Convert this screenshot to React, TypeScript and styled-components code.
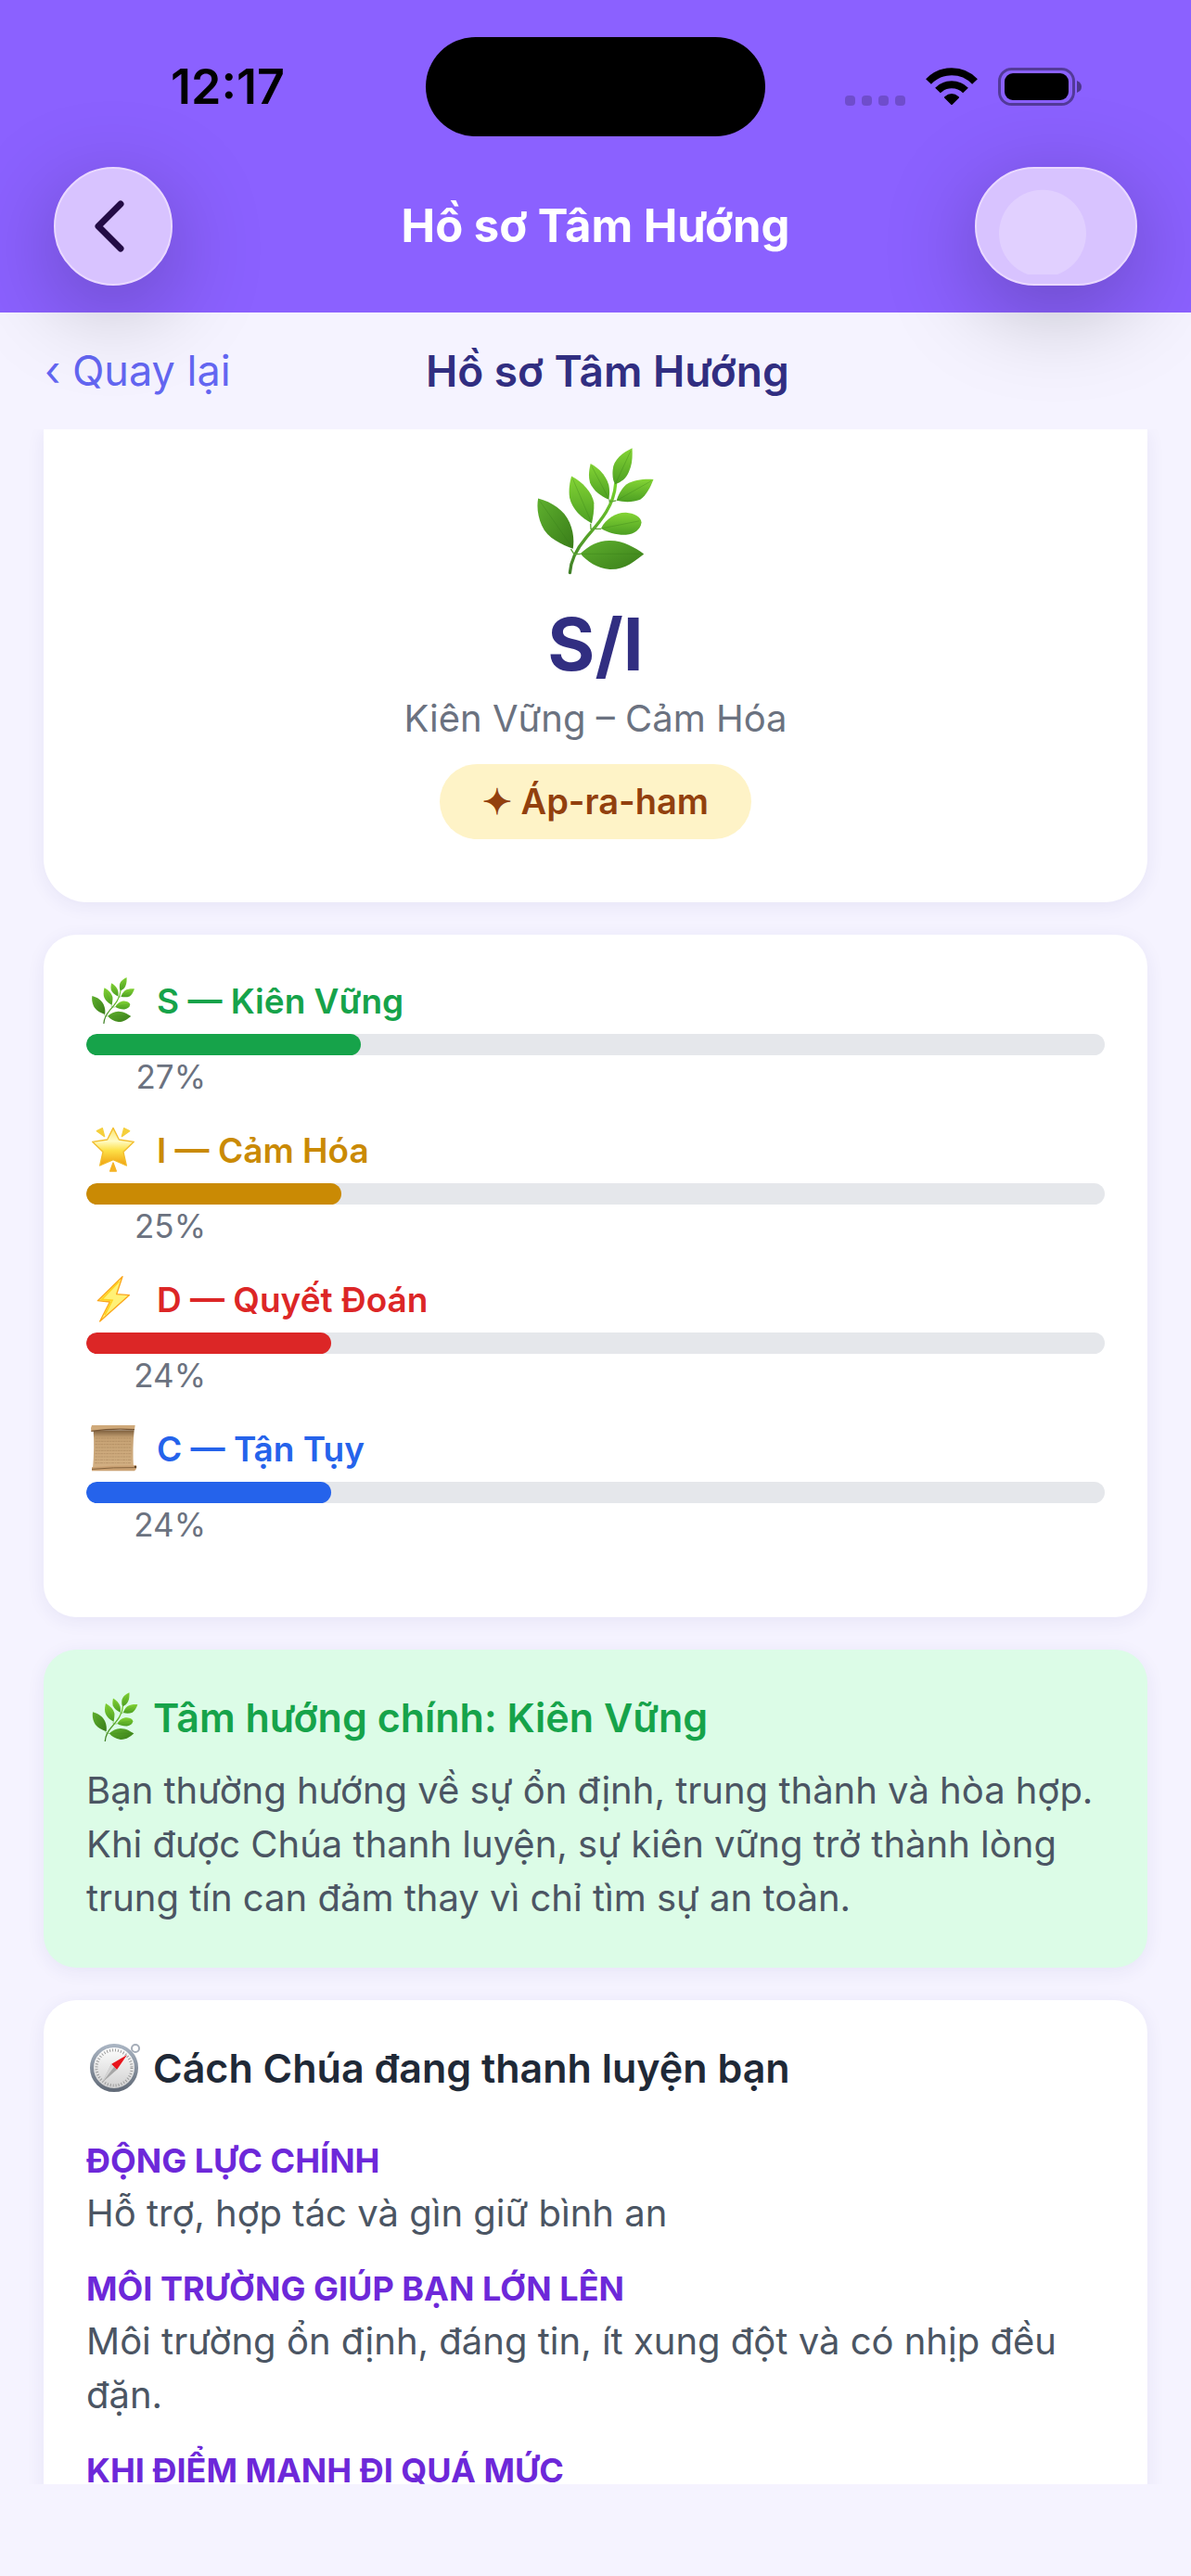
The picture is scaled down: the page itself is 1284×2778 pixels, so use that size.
import React from 'react';
import styled, { createGlobalStyle } from 'styled-components';

const GlobalStyle = createGlobalStyle`
  * {
    box-sizing: border-box;
  }

  body {
    margin: 0;
    background: #f5f3ff;
    font-family: Inter, 'Noto Sans', 'Liberation Sans', sans-serif;
  }

  h1, h2, h3, p {
    margin: 0;
  }

  button {
    border: 0;
    padding: 0;
    background: none;
    font: inherit;
    cursor: pointer;
  }
`;

const Screen = styled.div`
  display: flex;
  flex-direction: column;
  height: 100vh;
`;

/* the header sits above the page so the button shadows fall on it */
const Header = styled.header`
  position: relative;
  z-index: 1;
  flex: none;
  padding: 40px 0 29px;
  background: #8b61ff;
`;

const StatusBar = styled.div`
  display: grid;
  grid-template-columns: 1fr 366px 1fr;
  align-items: center;
`;

const Time = styled.span`
  padding-left: 32px;
  font-size: 52px;
  font-weight: 600;
  line-height: 60px;
  text-align: center;
`;

const Island = styled.div`
  height: 107px;
  border-radius: 54px;
  background: #000;
`;

const Indicators = styled.div`
  display: flex;
  align-items: flex-end;
  justify-content: center;
  gap: 22px;
  padding-right: 32px;
`;

const Dots = styled.div`
  display: flex;
  gap: 7px;
`;

const Dot = styled.span`
  width: 11px;
  height: 11px;
  border-radius: 4px;
  background: rgba(0, 0, 0, 0.2);
`;

const NavBar = styled.nav`
  display: grid;
  grid-template-columns: 1fr auto 1fr;
  align-items: center;
  margin-top: 33px;
  padding: 0 58px;
`;

const NavTitle = styled.h1`
  color: #fff;
  font-size: 49px;
  font-weight: 700;
  line-height: 60px;
`;

const GlassButton = styled.button<{ wide?: boolean }>`
  display: flex;
  align-items: center;
  justify-content: center;
  justify-self: ${({ wide }) => (wide ? 'end' : 'start')};
  width: ${({ wide }) => (wide ? '175px' : '128px')};
  height: 128px;
  border: 2px solid #ead9ff;
  border-radius: 64px;
  background: #d8c3ff;
  box-shadow: 0 24px 100px rgba(0, 0, 0, 0.26);
`;

const SubHeader = styled.div`
  display: flex;
  flex: none;
  align-items: center;
  justify-content: space-between;
  height: 126px;
  padding: 0 48px;
`;

const BackLink = styled.button`
  color: #6366f1;
  font-size: 45px;
  line-height: 60px;
`;

const PageTitle = styled.h2`
  color: #312e81;
  font-size: 46px;
  font-weight: 600;
  line-height: 60px;
`;

const Spacer = styled.div`
  width: 175px;
`;

const Content = styled.main`
  display: flex;
  flex: 1;
  flex-direction: column;
  gap: 35px;
  min-height: 0;
  margin-bottom: 99px;
  padding: 0 47px;
  overflow: hidden;
`;

const Card = styled.section<{ background?: string }>`
  flex: none;
  padding: 46px;
  border-radius: 35px;
  background: ${({ background }) => background || '#fff'};
  box-shadow: 0 4px 20px rgba(49, 46, 129, 0.07);
`;

const Hero = styled(Card)`
  display: flex;
  flex-direction: column;
  align-items: center;
  padding: 20px 46px 68px;
  border-radius: 0 0 47px 47px;
`;

const TypeCode = styled.h3`
  margin-top: 28px;
  color: #312e81;
  font-size: 78px;
  font-weight: 700;
  line-height: 94px;
`;

const TypeName = styled.p`
  margin-top: 4px;
  color: #6b7280;
  font-size: 40px;
  line-height: 58px;
`;

const Badge = styled.span`
  margin-top: 20px;
  padding: 0 46px;
  border-radius: 41px;
  background: #fef3c7;
  color: #92400e;
  font-size: 38px;
  font-weight: 600;
  line-height: 81px;
`;

const Score = styled.div`
  padding-bottom: 31px;
`;

const ScoreHead = styled.div`
  display: flex;
  align-items: center;
  gap: 18px;
  height: 50px;
`;

const ScoreLabel = styled.span<{ color: string }>`
  color: ${({ color }) => color};
  font-size: 37px;
  font-weight: 600;
`;

const Track = styled.div`
  height: 23px;
  margin-top: 11px;
  border-radius: 12px;
  background: #e5e7eb;
  overflow: hidden;
`;

const Fill = styled.div<{ color: string }>`
  height: 100%;
  border-radius: 12px;
  background: ${({ color }) => color};
`;

const Percent = styled.div`
  width: 129px;
  color: #6b7280;
  font-size: 35px;
  line-height: 46px;
  text-align: right;
`;

const CardTitle = styled.h3<{ color: string; space: number }>`
  display: flex;
  align-items: center;
  gap: 10px;
  height: 53px;
  margin-bottom: ${({ space }) => space}px;
  color: ${({ color }) => color};
  font-size: 43px;
  font-weight: 600;
`;

const Body = styled.p`
  color: #4b5563;
  font-size: 40px;
  line-height: 58px;
`;

const Topic = styled.div`
  padding-bottom: 30px;
`;

const TopicLabel = styled.h4`
  margin: 0 0 6px;
  color: #6d28d9;
  font-size: 36px;
  font-weight: 700;
  line-height: 44px;
  text-transform: uppercase;
`;

interface IconProps {
  width?: number;
  height?: number;
  viewBox?: string;
}

const Leaf: React.FC<IconProps> = ({
  width = 58,
  height = 50,
  viewBox = '8 40 475 410'
}) => (
  <svg width={width} height={height} viewBox={viewBox} aria-hidden="true">
    <defs>
      <linearGradient id="leafLight" x1="0" y1="0" x2="0" y2="1">
        <stop offset="0" stopColor="#84d435" />
        <stop offset="1" stopColor="#4c9f22" />
      </linearGradient>
      <linearGradient id="leafDark" x1="0" y1="0" x2="1" y2="1">
        <stop offset="0" stopColor="#5fb02e" />
        <stop offset="1" stopColor="#397d19" />
      </linearGradient>
      <linearGradient id="stem" x1="0" y1="0" x2="0" y2="1">
        <stop offset="0" stopColor="#76d32b" />
        <stop offset="1" stopColor="#3f7f27" />
      </linearGradient>
    </defs>
    <path
      d="M163 445C166 400 187 365 215 332C255 285 306 232 311 157"
      fill="none"
      stroke="url(#stem)"
      strokeWidth="10"
      strokeLinecap="round"
    />
    <path
      d="M166 368L177 385L198 384M230 286L231 303L265 303M291 207L292 215L313 211"
      fill="none"
      stroke="#5da536"
      strokeWidth="4"
    />
    <g fill="url(#leafLight)">
      <path d="M365 41C335 55 304 78 302 112C300 135 304 150 310 158C330 150 345 140 354 118C366 94 366 66 365 41Z" />
      <path d="M230 91C258 106 280 130 289 160C293 180 291 195 289 208C262 196 240 180 228 153C222 130 226 108 230 91Z" />
      <path d="M434 142C405 140 370 143 347 158C330 172 320 192 314 211C340 217 368 217 391 208C412 192 424 167 434 142Z" />
      <path d="M168 132C204 151 235 184 241 218C242 242 238 265 234 285C202 268 170 240 162 202C158 175 163 151 168 132Z" />
      <path d="M264 301C280 270 312 249 345 250C370 252 394 264 395 282C392 305 372 319 345 322C315 323 286 316 264 301Z" />
    </g>
    <g fill="url(#leafDark)">
      <path d="M60 204C105 216 145 242 162 282C175 312 177 340 173 367C138 354 90 334 72 292C59 262 55 232 60 204Z" />
      <path d="M197 383C225 357 254 342 290 341C336 340 374 364 403 384C374 405 345 435 292 434C250 430 219 409 197 383Z" />
    </g>
    <path
      d="M360 50L311 156M233 98L289 205M427 147L316 210M172 140L233 282M388 277L267 301M66 213L172 365M395 384L201 384"
      fill="none"
      stroke="#327a16"
      strokeWidth="2"
      opacity="0.45"
    />
  </svg>
);

const Star = () => (
  <svg width="58" height="50" viewBox="0 0 174 150" aria-hidden="true">
    <defs>
      <linearGradient id="star" x1="0" y1="0" x2="0" y2="1">
        <stop offset="0" stopColor="#fbe36a" />
        <stop offset="0.35" stopColor="#fffbc4" />
        <stop offset="0.6" stopColor="#fde047" />
        <stop offset="1" stopColor="#f0a010" />
      </linearGradient>
    </defs>
    <path
      d="M87 4L106 42L154 49L120 82L130 126L87 107L44 126L54 82L20 49L68 42Z"
      fill="url(#star)"
      stroke="#f2bd2c"
      strokeWidth="4"
      strokeLinejoin="round"
    />
    <path
      d="M34 14L52 5L59 32ZM140 14L122 5L115 32Z"
      fill="#f5cf3c"
      stroke="#f5cf3c"
      strokeWidth="4"
      strokeLinejoin="round"
    />
    <path
      d="M87 117L77 144H97Z"
      fill="#f5b324"
      stroke="#f5b324"
      strokeWidth="4"
      strokeLinejoin="round"
    />
  </svg>
);

const Bolt = () => (
  <svg width="58" height="50" viewBox="0 0 174 150" aria-hidden="true">
    <path
      d="M117 2L37 80L76 84L44 147L139 62L98 59Z"
      fill="#fff176"
      stroke="#fba61a"
      strokeWidth="4"
      strokeLinejoin="round"
    />
    <path d="M106 18L50 76L84 79L60 126" fill="none" stroke="#ffd21f" strokeWidth="5" />
  </svg>
);

const Scroll = () => (
  <svg width="58" height="50" viewBox="0 0 174 150" aria-hidden="true">
    <defs>
      <linearGradient id="paper" x1="0" y1="0" x2="0" y2="1">
        <stop offset="0" stopColor="#7d5f3d" />
        <stop offset="0.2" stopColor="#c6a274" />
        <stop offset="1" stopColor="#d3b083" />
      </linearGradient>
    </defs>
    <path d="M23 16H155Q149 75 153 138H21Q27 75 23 16Z" fill="url(#paper)" />
    <path
      d="M29 42H145M29 52H144M28 62H146M29 72H144M29 82H145M28 92H146M28 102H144M27 112H147M27 122H145"
      stroke="#8f6d45"
      strokeWidth="2"
      strokeDasharray="9 2 5 2"
      opacity="0.5"
    />
    <path d="M18 0H158L156 14Q88 10 16 19L15 9Z" fill="#cfa97a" />
    <path d="M16 19Q88 9 156 14" fill="none" stroke="#775634" strokeWidth="4" />
    <path d="M18 136Q90 128 162 130V141L156 148H18Z" fill="#cba274" />
    <path d="M18 142Q90 136 155 137" fill="none" stroke="#83613b" strokeWidth="3" />
    <circle cx="159" cy="135" r="4" fill="#5e4428" />
  </svg>
);

const Compass = () => (
  <svg width="62" height="53" viewBox="0 0 62 53" aria-hidden="true">
    <defs>
      <linearGradient id="rim" x1="0" y1="0" x2="0" y2="1">
        <stop offset="0" stopColor="#a9b4c2" />
        <stop offset="1" stopColor="#626b78" />
      </linearGradient>
      <linearGradient id="dial" x1="0" y1="0" x2="0" y2="1">
        <stop offset="0" stopColor="#ffffff" />
        <stop offset="1" stopColor="#cfcfcf" />
      </linearGradient>
    </defs>
    <circle cx="53" cy="6" r="4" fill="none" stroke="#a5adb8" strokeWidth="2" />
    <circle cx="30" cy="27" r="24" fill="url(#dial)" stroke="url(#rim)" strokeWidth="4" />
    <circle
      cx="30"
      cy="27"
      r="19"
      fill="none"
      stroke="#9b9b9b"
      strokeWidth="3"
      strokeDasharray="1 2"
    />
    <path d="M44 13L33 29L27 23Z" fill="#e8141c" />
    <path d="M33 29L17 43L27 23Z" fill="#a6a6a6" />
    <path d="M30 26L17 43L27 23Z" fill="#d6d6d6" />
  </svg>
);

const Wifi = () => (
  <svg width="56" height="41" viewBox="0 0 56 41" aria-hidden="true">
    <path
      d="M3 15A34.5 34.5 0 0 1 53 15M13 24.5A21 21 0 0 1 43 24.5"
      fill="none"
      stroke="#000"
      strokeWidth="8"
    />
    <path
      d="M21 32Q28 26 35 32L28 39Z"
      stroke="#000"
      strokeWidth="2"
      strokeLinejoin="round"
    />
  </svg>
);

const Battery = () => (
  <svg width="90" height="41" viewBox="0 0 90 41" aria-hidden="true">
    <rect
      x="1.5"
      y="1.5"
      width="80"
      height="38"
      rx="13"
      fill="none"
      stroke="#000"
      strokeOpacity="0.4"
      strokeWidth="3"
    />
    <rect x="7" y="6" width="69" height="29" rx="9" />
    <path d="M85 14Q90 16 90 20.500Q90 25 85 27Z" fillOpacity="0.45" />
  </svg>
);

const scores = [
  { label: 'S — Kiên Vững', value: 27, color: '#16a34a', icon: <Leaf /> },
  { label: 'I — Cảm Hóa', value: 25, color: '#ca8a04', icon: <Star /> },
  { label: 'D — Quyết Đoán', value: 24, color: '#dc2626', icon: <Bolt /> },
  { label: 'C — Tận Tụy', value: 24, color: '#2563eb', icon: <Scroll /> }
];

const topics = [
  { label: 'Động lực chính', text: 'Hỗ trợ, hợp tác và gìn giữ bình an' },
  {
    label: 'Môi trường giúp bạn lớn lên',
    text: 'Môi trường ổn định, đáng tin, ít xung đột và có nhịp đều đặn.'
  },
  { label: 'Khi điểm mạnh đi quá mức', text: '' }
];

const App: React.FC = () => (
  <Screen>
    <GlobalStyle />
    <Header>
      <StatusBar>
        <Time>12:17</Time>
        <Island />
        <Indicators>
          <Dots>
            <Dot />
            <Dot />
            <Dot />
            <Dot />
          </Dots>
          <Wifi />
          <Battery />
        </Indicators>
      </StatusBar>
      <NavBar>
        <GlassButton aria-label="Quay lại">
          <svg width="42" height="56" viewBox="0 0 42 56" aria-hidden="true">
            <path
              d="M29 4L5 28L29 52"
              fill="none"
              stroke="#230b45"
              strokeWidth="7"
              strokeLinecap="round"
              strokeLinejoin="round"
            />
          </svg>
        </GlassButton>
        <NavTitle>Hồ sơ Tâm Hướng</NavTitle>
        <GlassButton wide aria-label="Tùy chọn">
          <svg width="124" height="104" viewBox="0 -14 124 104" aria-hidden="true">
            <path d="M31 90A47 47 0 1 1 63 90Z" fill="#e1d0ff" />
          </svg>
        </GlassButton>
      </NavBar>
    </Header>
    <SubHeader>
      <BackLink>‹ Quay lại</BackLink>
      <PageTitle>Hồ sơ Tâm Hướng</PageTitle>
      <Spacer />
    </SubHeader>
    <Content>
      <Hero>
        <Leaf width={126} height={137} viewBox="57 40 378 412" />
        <TypeCode>S/I</TypeCode>
        <TypeName>Kiên Vững – Cảm Hóa</TypeName>
        <Badge>✦ Áp-ra-ham</Badge>
      </Hero>
      <Card>
        {scores.map(({ label, value, color, icon }) => (
          <Score key={label}>
            <ScoreHead>
              {icon}
              <ScoreLabel color={color}>{label}</ScoreLabel>
            </ScoreHead>
            <Track>
              <Fill color={color} style={{ width: `${value}%` }} />
            </Track>
            <Percent>{value}%</Percent>
          </Score>
        ))}
      </Card>
      <Card background="#dcfce7">
        <CardTitle color="#16a34a" space={24}>
          <Leaf width={62} height={53} />
          Tâm hướng chính: Kiên Vững
        </CardTitle>
        <Body>
          Bạn thường hướng về sự ổn định, trung thành và hòa hợp. Khi được Chúa
          thanh luyện, sự kiên vững trở thành lòng trung tín can đảm thay vì chỉ
          tìm sự an toàn.
        </Body>
      </Card>
      <Card>
        <CardTitle color="#1f2937" space={52}>
          <Compass />
          Cách Chúa đang thanh luyện bạn
        </CardTitle>
        {topics.map(({ label, text }) => (
          <Topic key={label}>
            <TopicLabel>{label}</TopicLabel>
            {text ? <Body>{text}</Body> : null}
          </Topic>
        ))}
      </Card>
    </Content>
  </Screen>
);

export default App;
